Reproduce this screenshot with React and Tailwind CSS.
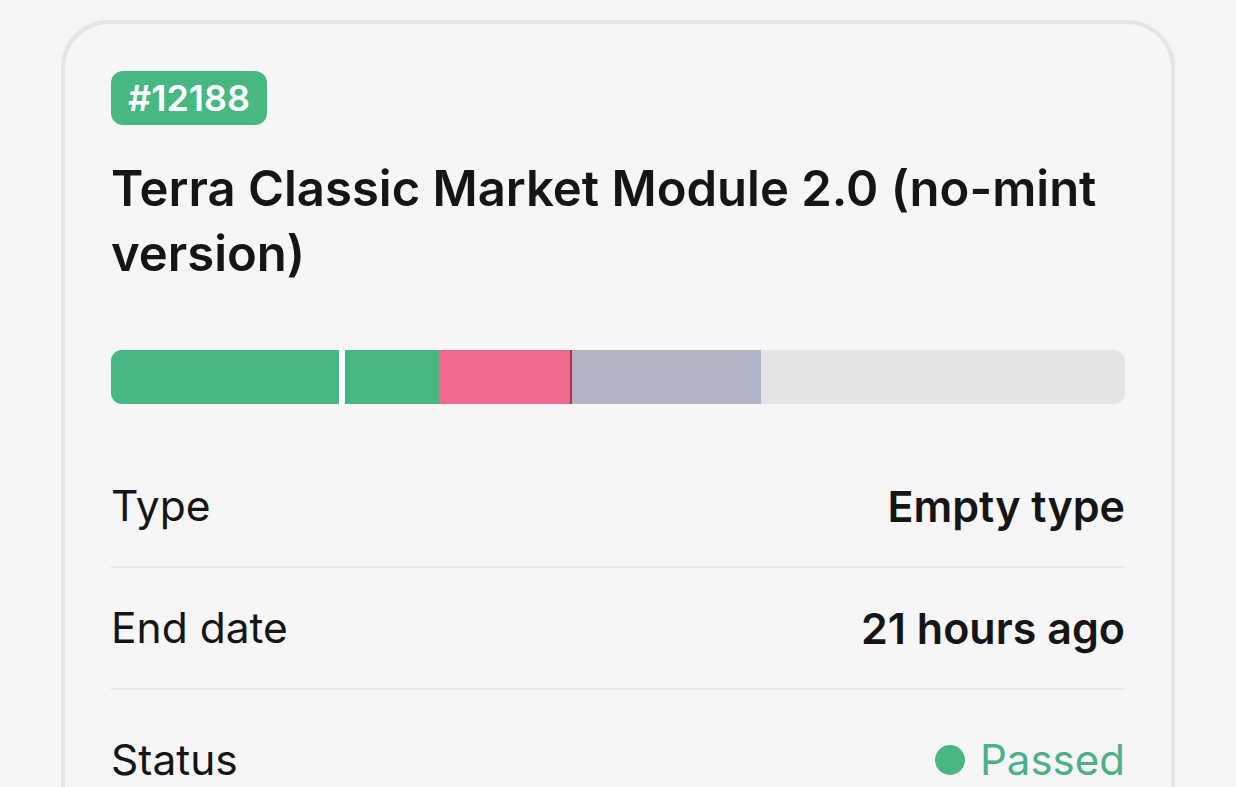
import React from "react";

const segments = [
  { w: "w-[234px]", cls: "bg-[#48b883] border-r-[6px] border-white" },
  { w: "w-[94px]", cls: "bg-[#48b883]" },
  { w: "w-[133px]", cls: "bg-[#ee6a8c] border-r-2 border-[#b3304f]" },
  { w: "w-[189px]", cls: "bg-[#b0b3c3]" },
];

function Row({ label, children, last, className = "" }) {
  return (
    <div
      className={
        "flex items-center justify-between " +
        (last ? "" : "border-b-2 border-[#e7e7e7] ") +
        className
      }
    >
      <span className="text-[42.5px] leading-[48px] text-[#151515]">
        {label}
      </span>
      {children}
    </div>
  );
}

export default function App() {
  return (
    <div
      className="min-h-screen bg-[#f5f5f5] px-[61px] pt-[20px] overflow-hidden"
      style={{ fontFamily: "Inter, 'Noto Sans', sans-serif" }}
    >
      {/* CARD */}
      <div className="h-[900px] rounded-[48px] border-4 border-[#e5e5e5] bg-[#f6f6f6] px-[46px] pt-[47px]">
        <span className="inline-flex h-[54px] items-center rounded-[12px] bg-[#48b883] px-[17px] text-[36px] font-semibold text-white">
          #12188
        </span>

        <h1 className="mt-[31px] text-[49px] leading-[65px] font-semibold text-[#151515]">
          Terra Classic Market Module 2.0 (no-mint version)
        </h1>

        {/* VOTE BAR */}
        <div className="mt-[64px] flex h-[54px] overflow-hidden rounded-[11px] bg-[#e5e5e5]">
          {segments.map((s, i) => (
            <div key={i} className={s.w + " " + s.cls} />
          ))}
        </div>

        <div className="mt-[42px]">
          <Row label="Type" className="py-[36px]">
            <span className="text-[43px] leading-[48px] font-semibold text-[#151515]">
              Empty type
            </span>
          </Row>
          <Row label="End date" className="py-[36px]">
            <span className="text-[43px] leading-[48px] font-semibold text-[#151515]">
              21 hours ago
            </span>
          </Row>
          <Row label="Status" last className="pt-[46px]">
            <span className="flex items-center gap-[15px] text-[42px] leading-[48px] text-[#4caf85]">
              <span className="h-[30px] w-[30px] rounded-full bg-[#48b883]" />
              Passed
            </span>
          </Row>
        </div>
      </div>
    </div>
  );
}
